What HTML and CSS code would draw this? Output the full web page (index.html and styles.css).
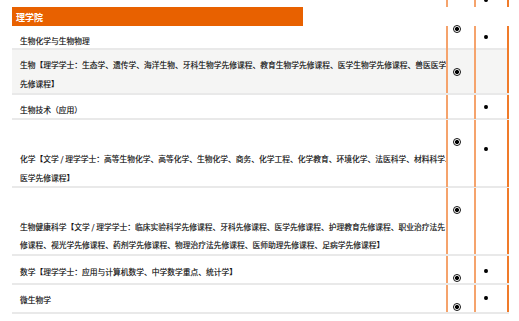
FILE: index.html
```html
<!DOCTYPE html>
<html lang="zh-CN">
<head>
<meta charset="utf-8">
<title>理学院</title>
<link rel="stylesheet" href="styles.css">
</head>
<body>
<div class="table">
  <div class="row row0">
    <div class="name"></div>
    <div class="col col-a"></div>
    <div class="col col-b"><span class="dot d-prev"></span></div>
  </div>
  <div class="head"><div class="head-title">理学院</div></div>
  <div class="row r-24">
    <div class="name">生物化学与生物物理</div>
    <div class="col col-a"><span class="radio r-top"></span></div>
    <div class="col col-b"><span class="dot d-9"></span></div>
  </div>
  <div class="row r-45 shaded">
    <div class="name">生物【理学学士：生态学、遗传学、海洋生物、牙科生物学先修课程、教育生物学先修课程、医学生物学先修课程、兽医医学<br>先修课程】</div>
    <div class="col col-a"><span class="radio"></span></div>
    <div class="col col-b"></div>
  </div>
  <div class="row r-25">
    <div class="name">生物技术（应用）</div>
    <div class="col col-a"></div>
    <div class="col col-b"><span class="dot d-10"></span></div>
  </div>
  <div class="row r-68">
    <div class="name tall">化学【文学 / 理学学士：高等生物化学、高等化学、生物化学、商务、化学工程、化学教育、环境化学、法医科学、材料科学、<br>医学先修课程】</div>
    <div class="col col-a"><span class="radio r-17"></span></div>
    <div class="col col-b"><span class="dot d-27"></span></div>
  </div>
  <div class="row r-68">
    <div class="name tall t2">生物健康科学【文学 / 理学学士：临床实验科学先修课程、牙科先修课程、医学先修课程、护理教育先修课程、职业治疗法先<br>修课程、视光学先修课程、药剂学先修课程、物理治疗法先修课程、医师助理先修课程、足病学先修课程】</div>
    <div class="col col-a"><span class="radio"></span></div>
    <div class="col col-b"></div>
  </div>
  <div class="row r-29">
    <div class="name n6">数学【理学学士：应用与计算机数学、中学数学重点、统计学】</div>
    <div class="col col-a"><span class="radio"></span></div>
    <div class="col col-b"><span class="dot d-13"></span></div>
  </div>
  <div class="row r-29">
    <div class="name">微生物学</div>
    <div class="col col-a"><span class="radio"></span></div>
    <div class="col col-b"><span class="dot d-11"></span></div>
  </div>
</div>
</body>
</html>
```
FILE: styles.css
```css
* { box-sizing: border-box; }
html, body { margin: 0; padding: 0; background: #fff; }
body {
  font-family: "Noto Sans CJK SC", "Noto Sans", sans-serif;
  color: #0d0d0d;
}
.table {
  margin-left: 12px;
  width: 497px;
}
.row {
  display: grid;
  grid-template-columns: 434px 28px 35px;
  border-bottom: 2px solid #e9e9e9;
}
.row0 { height: 7px; border-bottom: 0; overflow: hidden; }
.r-24 { height: 24px; }
.r-45 { height: 45px; }
.r-25 { height: 25px; }
.r-68 { height: 68px; }
.r-29 { height: 29px; }
.shaded { background: #f5f5f4; }
.name {
  padding: 5px 0 0 8px;
  font-size: 7.75px;
  line-height: 19px;
  white-space: nowrap;
  -webkit-text-stroke: 0.15px #0d0d0d;
}
.name.tall { padding-top: 29px; }
.name.tall.t2 { padding-top: 30px; line-height: 18px; }
.name.n6 { padding-top: 6px; }
.col { border-left: 2px solid #f5a36c; }
.col-a { padding-left: 5px; padding-top: 18px; }
.col-b { border-right: 2px solid #f07b2a; padding-left: 8px; }
.head {
  height: 19px;
  background: #fff;
}
.head-title {
  width: 291px;
  height: 19px;
  background: #e86100;
  color: #fff;
  font-weight: bold;
  font-size: 9px;
  line-height: 16px;
  padding: 3px 0 0 4px;
}
.radio {
  display: block;
  width: 8px;
  height: 8px;
  border: 1px solid #111;
  border-radius: 50%;
  background: radial-gradient(circle, #000 0 1.8px, transparent 2.3px);
}
.r-top { margin-top: -19px; }
.r-17 { margin-top: -0.5px; }
.dot {
  display: block;
  width: 3.5px;
  height: 4px;
  border-radius: 50%;
  background: #000;
}
.d-prev { margin-top: -2px; }
.d-9 { margin-top: 9px; }
.d-10 { margin-top: 10px; }
.d-11 { margin-top: 11px; }
.d-13 { margin-top: 12.5px; }
.d-27 { margin-top: 27px; }
```
